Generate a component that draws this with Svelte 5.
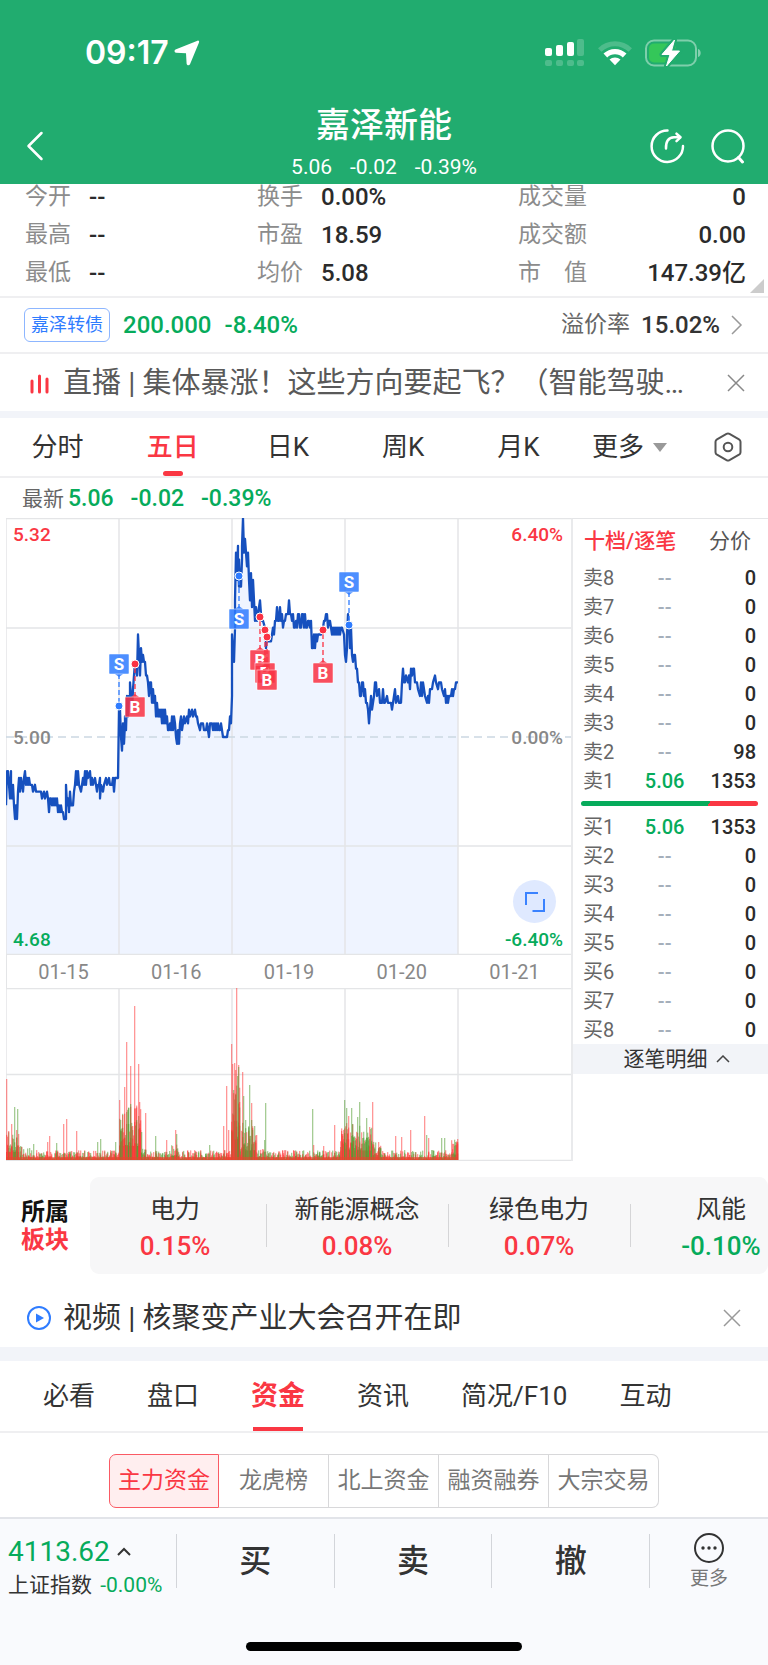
<script>
  const quotes = [
    ["今开", "--", "换手", "0.00%", "成交量", "0"],
    ["最高", "--", "市盈", "18.59", "成交额", "0.00"],
    ["最低", "--", "均价", "5.08", "市　值", "147.39亿"],
  ];

  const periods = ["分时", "五日", "日K", "周K", "月K"];
  let period = $state("五日");

  const asks = [
    ["卖8", "--", 0],
    ["卖7", "--", 0],
    ["卖6", "--", 0],
    ["卖5", "--", 0],
    ["卖4", "--", 0],
    ["卖3", "--", 0],
    ["卖2", "--", 98],
    ["卖1", "5.06", 1353],
  ];
  const bids = [
    ["买1", "5.06", 1353],
    ["买2", "--", 0],
    ["买3", "--", 0],
    ["买4", "--", 0],
    ["买5", "--", 0],
    ["买6", "--", 0],
    ["买7", "--", 0],
    ["买8", "--", 0],
  ];

  const days = ["01-15", "01-16", "01-19", "01-20", "01-21"];

  const boards = [
    ["电力", "0.15%"],
    ["新能源概念", "0.08%"],
    ["绿色电力", "0.07%"],
    ["风能", "-0.10%"],
  ];

  const sections = ["必看", "盘口", "资金", "资讯", "简况/F10", "互动"];
  let section = $state("资金");

  const funds = ["主力资金", "龙虎榜", "北上资金", "融资融券", "大宗交易"];
  let fund = $state("主力资金");

  // [x, first, last] in ticks of 0.01 away from 5.00
  const ticks = [
    [0, -10, -5], [2, -5, -7], [4, -9, -5], [5, -7, -9], [7, -7, -10], [9, -12, -10],
    [11, -12, -8], [13, -6, -8], [15, -6, -7], [17, -8, -6], [19, -5, -7], [21, -6, -7],
    [23, -6, -7], [26, -7, -8], [29, -7, -8], [33, -8, -8], [35, -8, -9], [38, -8, -9],
    [41, -8, -9], [43, -11, -9], [45, -9, -10], [47, -9, -10], [49, -9, -10], [51, -9, -11],
    [53, -10, -11], [55, -10, -11], [57, -11, -12], [59, -12, -12], [60, -7, -10], [62, -9, -11],
    [64, -8, -10], [66, -10, -10], [68, -8, -7], [70, -5, -7], [72, -5, -7], [75, -8, -7],
    [77, -6, -7], [79, -5, -7], [81, -5, -6], [84, -5, -7], [86, -6, -7], [89, -6, -7],
    [91, -8, -7], [93, -7, -6], [94, -9, -7], [97, -8, -7], [100, -6, -7], [103, -6, -7],
    [106, -7, -6], [108, -8, -6], [110, -6, -6], [112, -6, 4], [114, 4, 0], [116, -2, 2],
    [118, -1, 2], [119, 3, 1], [121, 6, 3], [123, 6, 6], [124, 8, 6], [126, 4, 7],
    [128, 9, 11], [130, 10, 9], [132, 15, 12], [133, 12, 9], [135, 13, 11], [137, 12, 11],
    [139, 11, 9], [141, 9, 8], [143, 6, 8], [145, 8, 5], [147, 7, 5], [149, 6, 3],
    [151, 5, 3], [153, 4, 3], [155, 4, 2], [157, 4, 2], [159, 4, 2], [161, 3, 1],
    [163, 1, 2], [165, 1, 3], [167, 1, 3], [169, 2, 0], [171, -1, 1], [173, -1, 2],
    [175, 3, 1], [178, 3, 2], [181, 3, 2], [183, 4, 3], [186, 4, 3], [189, 4, 3],
    [191, 3, 2], [194, 1, 2], [197, 2, 1], [200, 1, 2], [203, 0, 2], [206, 2, 1],
    [208, 2, 1], [210, 2, 1], [212, 2, 1], [214, 1, 2], [216, 1, 0], [219, 0, 0],
    [221, 0, 1], [223, 1, 3], [225, 2, 6], [226, 15, 12], [228, 11, 16], [229, 20, 27],
    [231, 23, 28], [232, 26, 22], [233, 26, 22], [235, 22, 26], [236, 28, 32], [238, 27, 29],
    [240, 27, 25], [242, 27, 23], [244, 20, 24], [246, 19, 22], [247, 23, 20], [249, 17, 19],
    [251, 17, 18], [254, 20, 18], [256, 17, 17], [259, 16, 15], [260, 13, 15], [262, 14, 14],
    [265, 14, 15], [267, 16, 15], [269, 17, 17], [271, 19, 17], [273, 17, 19], [275, 17, 18],
    [277, 16, 17], [279, 17, 18], [281, 18, 18], [283, 20, 18], [285, 18, 17], [287, 18, 16],
    [289, 16, 17], [291, 16, 18], [293, 18, 16], [295, 16, 18], [297, 18, 16], [299, 18, 16],
    [301, 16, 17], [303, 17, 16], [305, 17, 13], [307, 13, 15], [309, 13, 15], [311, 14, 15],
    [313, 15, 15], [315, 15, 16], [317, 16, 17], [319, 17, 18], [321, 18, 16], [323, 17, 17],
    [325, 16, 15], [327, 16, 15], [329, 16, 15], [331, 16, 15], [333, 16, 15], [335, 16, 16],
    [338, 15, 12], [340, 11, 13], [341, 15, 18], [343, 16, 13], [345, 16, 12], [347, 11, 12],
    [349, 12, 10], [351, 10, 8], [353, 8, 6], [355, 6, 8], [357, 8, 6], [359, 7, 5],
    [361, 5, 4], [362, 4, 2], [364, 4, 6], [366, 4, 5], [368, 6, 8], [370, 8, 6],
    [373, 7, 5], [376, 5, 7], [378, 5, 5], [381, 6, 5], [385, 5, 4], [387, 5, 6],
    [389, 7, 5], [392, 6, 5], [395, 5, 8], [397, 10, 8], [399, 8, 9], [402, 8, 9],
    [404, 7, 10], [406, 9, 10], [408, 10, 8], [411, 8, 7], [414, 6, 8], [416, 6, 8],
    [418, 7, 6], [421, 5, 6], [423, 5, 7], [426, 7, 8], [429, 9, 8], [432, 7, 8],
    [435, 8, 7], [438, 6, 7], [440, 5, 6], [442, 5, 6], [445, 6, 7], [447, 6, 7],
    [449, 7, 8], [451, 8, 8],
  ];

  const levelY = (t) => 219 - t * 6.83;
  const line = ticks
    .map(([x, a, b]) => `${x},${levelY(a).toFixed(1)} ${x + 1},${levelY(b).toFixed(1)}`)
    .join(" ");
  const area = `0,437 ${line} 452,437`;

  // dot position, badge position (top of the 20px square)
  const trades = [
    { side: "S", x: 113, dot: 188, top: 136 },
    { side: "B", x: 129, dot: 146, top: 179 },
    { side: "S", x: 233, dot: 58, top: 91 },
    { side: "B", x: 254, dot: 99, top: 132 },
    { side: "B", x: 259, dot: 112, top: 145 },
    { side: "B", x: 261, dot: 119, top: 152 },
    { side: "B", x: 317, dot: 112, top: 145 },
    { side: "S", x: 343, dot: 107, top: 54 },
  ];

  // [x, height, up]
  const spikes = [
    [0, 81, 1], [2, 29, 1], [5, 36, 1], [8, 53, 0], [11, 51, 0], [10, 30, 1], [12, 26, 1],
    [27, 16, 0], [41, 18, 1], [43, 24, 1], [50, 17, 0], [57, 36, 1], [60, 41, 1], [70, 29, 1],
    [91, 18, 0], [94, 21, 0], [109, 18, 0], [113, 60, 1], [114, 40, 0], [116, 45, 1],
    [118, 73, 1], [120, 118, 1], [122, 36, 0], [124, 94, 1], [124, 56, 0], [126, 34, 1],
    [128, 154, 1], [130, 40, 0], [132, 96, 1], [133, 58, 1], [135, 28, 0], [139, 47, 1],
    [149, 24, 0], [160, 20, 1], [169, 30, 1], [170, 26, 0], [203, 15, 0], [217, 34, 1],
    [220, 74, 1], [222, 30, 1], [225, 116, 1], [226, 96, 1], [228, 97, 1], [229, 90, 1],
    [230, 172, 1], [231, 84, 0], [232, 95, 1], [232, 93, 0], [233, 58, 1], [236, 88, 1],
    [237, 64, 0], [239, 40, 0], [243, 75, 0], [245, 57, 1], [245, 40, 0], [248, 34, 0],
    [250, 25, 1], [258, 20, 0], [259, 57, 0], [306, 51, 0], [307, 15, 1], [317, 14, 1],
    [328, 35, 1], [336, 26, 1], [338, 60, 0], [340, 52, 0], [342, 44, 1], [345, 52, 0],
    [346, 36, 0], [351, 43, 0], [353, 58, 0], [360, 42, 0], [363, 33, 1], [366, 58, 1],
    [372, 18, 1], [389, 24, 1], [395, 23, 1], [404, 30, 1], [418, 44, 1], [420, 25, 0],
    [422, 22, 1], [435, 22, 0], [438, 22, 0], [449, 18, 0], [451, 18, 1],
  ];

  // busy stretches: [from, to, ceiling]
  const busy = [
    [0, 12, 24], [113, 135, 42], [165, 172, 12], [225, 234, 60], [235, 250, 28],
    [334, 366, 28], [366, 375, 14], [445, 452, 16],
  ];

  let seed = 17;
  const rand = () => {
    seed = (seed * 16807) % 2147483647;
    return seed / 2147483647;
  };

  const volumes = [];
  for (let x = 0; x < 452; x++) {
    const zone = busy.find(([from, to]) => x >= from && x < to);
    const since = x % 113;
    const cap = zone ? zone[2] : since < 45 ? 16 - since / 5 : 9;
    const floor = zone ? zone[2] / 3 : 1;
    for (let i = 0; i < 3; i++) {
      volumes.push([x, floor + Math.pow(rand(), 2) * cap, rand() > 0.42 ? 1 : 0]);
    }
  }
  volumes.push(...spikes);
</script>

<div class="app">
  <header>
    <div class="status">
      <span class="time">09:17</span>
      <svg class="locate" width="26" height="26" viewBox="0 0 26 26">
        <path d="M23.500.7 1.500 9.500c-1.500.8-1.300 3 .5 3.200l10 .6.6 10.200c.1 2 2.600 2.400 3.400.7L25 2.500C25.500 1.200 24.600.3 23.500.7z" fill="#fff" />
      </svg>
      <svg class="signal" width="40" height="28" viewBox="0 0 40 28">
        <g fill="#fff">
          <rect x="0" y="9" width="7" height="8" rx="2" />
          <rect x="11" y="6" width="7" height="11" rx="2" />
          <rect x="22" y="3" width="7" height="14" rx="2" />
        </g>
        <g fill="#fff" opacity=".2">
          <rect x="32" y="0" width="7" height="17" rx="2" />
          <rect x="0" y="21" width="7" height="6" rx="2" />
          <rect x="11" y="21" width="7" height="6" rx="2" />
          <rect x="22" y="21" width="7" height="6" rx="2" />
          <rect x="32" y="21" width="7" height="6" rx="2" />
        </g>
      </svg>
      <svg class="wifi" width="34" height="26" viewBox="0 0 34 26">
        <path d="M0 8.200a24.500 24.500 0 0 1 34 0l-3.500 3.600a19.300 19.300 0 0 0-27 0z" fill="#fff" opacity=".2" />
        <path d="M5.500 13.600a16.500 16.500 0 0 1 23 0l-3.700 3.800a11.300 11.300 0 0 0-15.600 0z" fill="#fff" />
        <path d="M11.500 19.600a8 8 0 0 1 11 0L17 25.300z" fill="#fff" />
      </svg>
      <svg width="57" height="28" viewBox="0 0 57 28">
        <rect x="1" y="1.500" width="50" height="25" rx="8" fill="none" stroke="#fff" stroke-opacity=".42" stroke-width="2" />
        <path d="M53 10c3.600 1 3.600 7 0 8z" fill="#fff" opacity=".45" />
        <rect x="4" y="4.500" width="27" height="19" rx="5" fill="#34c759" />
        <path d="M29.500 1 17 15.500h8L21.500 27 34.500 12h-8z" fill="#fff" stroke="#21ac6f" stroke-width="5" stroke-linejoin="round" />
        <path d="M29.500 1 17 15.500h8L21.500 27 34.500 12h-8z" fill="#fff" stroke="#fff" stroke-width="1" stroke-linejoin="round" />
      </svg>
    </div>
    <div class="nav">
      <button class="back" aria-label="返回">
        <svg width="18" height="30" viewBox="0 0 18 30">
          <path d="M15.500 2 2.500 15l13 13" fill="none" stroke="#fff" stroke-width="2.500" stroke-linecap="round" stroke-linejoin="round" />
        </svg>
      </button>
      <div class="title">
        <h1>嘉泽新能</h1>
        <p><span>5.06</span><span>-0.02</span><span>-0.39%</span></p>
      </div>
      <div class="actions">
        <button aria-label="分享">
          <svg width="36" height="36" viewBox="0 0 36 36" fill="none" stroke="#fff" stroke-width="2.500" stroke-linecap="round" stroke-linejoin="round">
            <path d="M18.500 2.500A15.700 15.700 0 1 0 34 18" />
            <path d="M17 20.500c-.3-7 2-11 8-11.300h6" />
            <path d="M27.500 5.700 31.500 9.300l-4 3.800" />
          </svg>
        </button>
        <button aria-label="搜索">
          <svg width="36" height="36" viewBox="0 0 36 36" fill="none" stroke="#fff" stroke-width="2.500" stroke-linecap="round">
            <circle cx="18" cy="18" r="15.500" />
            <path d="m28.500 29.500 4 4.500" stroke-width="3" />
          </svg>
        </button>
      </div>
    </div>
  </header>

  <section class="quotes">
    {#each quotes as [a, av, b, bv, c, cv]}
      <div class="quote">
        <span class="k">{a}</span><b class="v">{av}</b>
        <span class="k">{b}</span><b class="v">{bv}</b>
        <span class="k">{c}</span><b class="v end">{cv}</b>
      </div>
    {/each}
    <i class="corner"></i>
  </section>

  <section class="bond">
    <span class="tag">嘉泽转债</span>
    <b class="down">200.000</b>
    <b class="down">-8.40%</b>
    <span class="premium">溢价率</span>
    <b>15.02%</b>
    <svg width="12" height="20" viewBox="0 0 12 20">
      <path d="m1 1 9 9-9 9" fill="none" stroke="#999" stroke-width="1.500" />
    </svg>
  </section>

  <section class="news">
    <svg width="26" height="26" viewBox="0 0 26 26" stroke="#fa3743" stroke-width="3" stroke-linecap="round">
      <path d="M6 11v11M13.500 6v16M21 9v13" />
    </svg>
    <a href="#live">直播 | 集体暴涨！这些方向要起飞？（智能驾驶…</a>
    <button aria-label="关闭直播">
      <svg width="18" height="18" viewBox="0 0 18 18"><path d="m1 1 16 16M17 1 1 17" stroke="#888" stroke-width="1.500" /></svg>
    </button>
  </section>

  <nav class="periods">
    {#each periods as name}
      <button class:active={period === name} onclick={() => (period = name)}>{name}</button>
    {/each}
    <button class="more">更多<i></i></button>
    <button class="settings" aria-label="设置">
      <svg width="28" height="30" viewBox="0 0 28 30" fill="none" stroke="#555" stroke-width="2">
        <path d="M12.500 1.900q1.500-.8 3 0l9.500 5.400q1.500.9 1.500 2.500v10.400q0 1.600-1.500 2.500l-9.500 5.400q-1.500.8-3 0L3 22.700q-1.500-.9-1.500-2.500V9.800q0-1.600 1.500-2.500z" />
        <circle cx="14" cy="15" r="4.300" />
      </svg>
    </button>
  </nav>

  <p class="latest"><span>最新</span><b>5.06</b><b>-0.02</b><b>-0.39%</b></p>

  <section class="market">
    <div class="charts">
      <div class="price">
        <svg viewBox="0 0 565 437">
          <polygon points={area} fill="#eff4ff" />
          <g stroke="#e4e5e7" stroke-width="1.500">
            {#each [0, 113, 226, 339, 452] as x}
              <path d="M{x} 0V437" />
            {/each}
            <path d="M0 .5H565M0 110H565M0 328H565M0 436.500H565" />
          </g>
          <path d="M0 219H565" stroke="#cbd7e2" stroke-width="1.500" stroke-dasharray="8 5" />
          <polyline points={line} fill="none" stroke="#1650be" stroke-width="2.300" stroke-linejoin="round" />
          {#each trades as { side, x, dot, top }}
            {@const color = side === "S" ? "#2f7cff" : "#fa3243"}
            {@const above = top < dot}
            <path d="M{x} {above ? top + 20 : top} V{dot}" stroke={color} stroke-width="1.300" stroke-dasharray="5 3" />
            <g fill={color} opacity=".85">
              <rect x={x - 10} y={top} width="20" height="20" rx="1" />
              <path d={above ? `M${x - 4} ${top + 20}h8l-4 3z` : `M${x - 4} ${top}h8l-4-3z`} />
            </g>
            <rect x={x - 10} y={top} width="20" height="20" fill="none" stroke="#fff" stroke-opacity=".5" />
            <text {x} y={top + 16} text-anchor="middle">{side}</text>
            <circle cx={x} cy={dot} r="4" fill={color} stroke="#fff" stroke-width="1" />
          {/each}
        </svg>
        <span class="axis top-left up">5.32</span>
        <span class="axis top-right up">6.40%</span>
        <span class="axis mid-left">5.00</span>
        <span class="axis mid-right">0.00%</span>
        <span class="axis bottom-left down">4.68</span>
        <span class="axis bottom-right down">-6.40%</span>
        <button class="expand" aria-label="全屏">
          <svg width="22" height="22" viewBox="0 0 22 22">
            <path d="M2 14V2h12M8.500 20H20V8" fill="none" stroke="#3a82ff" stroke-width="2" />
          </svg>
        </button>
      </div>
      <div class="days">
        {#each days as day}
          <span>{day}</span>
        {/each}
      </div>
      <svg class="volume" viewBox="0 0 565 173">
        <g stroke="#e4e5e7" stroke-width="1.500">
          {#each [0, 113, 226, 339, 452] as x}
            <path d="M{x} 0V172" />
          {/each}
          <path d="M0 .5H565M0 86.500H565M0 172.500H565" />
        </g>
        {#each volumes as [x, h, up]}
          <rect {x} y={172 - h} width="1.300" height={h} fill={up ? "#ff3030" : "#4c9a2a"} opacity=".5" />
        {/each}
        <rect y="169" width="452" height="3" fill="#e8452e" opacity=".6" />
      </svg>
    </div>

    <div class="book">
      <div class="book-tabs">
        <button class="active">十档/逐笔</button>
        <button>分价</button>
      </div>
      <table>
        <tbody>
          {#each asks as [label, price, amount]}
            <tr><th>{label}</th><td class:down={price !== "--"}>{price}</td><td>{amount}</td></tr>
          {/each}
        </tbody>
      </table>
      <div class="ratio"></div>
      <table>
        <tbody>
          {#each bids as [label, price, amount]}
            <tr><th>{label}</th><td class:down={price !== "--"}>{price}</td><td>{amount}</td></tr>
          {/each}
        </tbody>
      </table>
      <button class="detail">
        逐笔明细
        <svg width="14" height="8" viewBox="0 0 14 8"><path d="m1 7 6-6 6 6" fill="none" stroke="#444" stroke-width="1.500" /></svg>
      </button>
    </div>
  </section>

  <section class="boards">
    <h2>所属<em>板块</em></h2>
    <ul>
      {#each boards as [name, change]}
        <li>
          <span>{name}</span>
          <b class={change.startsWith("-") ? "down" : "up"}>{change}</b>
        </li>
      {/each}
    </ul>
  </section>

  <section class="news video">
    <svg width="26" height="26" viewBox="0 0 26 26">
      <circle cx="13" cy="13" r="11" fill="none" stroke="#2f7cff" stroke-width="2" />
      <path d="M10 8.500v9l8-4.500z" fill="#2f7cff" />
    </svg>
    <a href="#video">视频 | 核聚变产业大会召开在即</a>
    <button aria-label="关闭视频">
      <svg width="18" height="18" viewBox="0 0 18 18"><path d="m1 1 16 16M17 1 1 17" stroke="#999" stroke-width="1.500" /></svg>
    </button>
  </section>

  <nav class="sections">
    {#each sections as name}
      <button class:active={section === name} onclick={() => (section = name)}>{name}</button>
    {/each}
  </nav>

  <div class="funds">
    {#each funds as name}
      <button class:active={fund === name} onclick={() => (fund = name)}>{name}</button>
    {/each}
  </div>

  <footer>
    <div class="toolbar">
      <button class="index">
        <span class="point">
          4113.62
          <svg width="14" height="9" viewBox="0 0 14 9"><path d="m1 8 6-6 6 6" fill="none" stroke="#333" stroke-width="2" /></svg>
        </span>
        <span class="name">上证指数 <em>-0.00%</em></span>
      </button>
      <button class="trade">买</button>
      <button class="trade">卖</button>
      <button class="trade">撤</button>
      <button class="other">
        <svg width="32" height="32" viewBox="0 0 32 32">
          <circle cx="16" cy="16" r="14" fill="none" stroke="#333" stroke-width="2" />
          <g fill="#333"><circle cx="10" cy="16" r="1.700" /><circle cx="16" cy="16" r="1.700" /><circle cx="22" cy="16" r="1.700" /></g>
        </svg>
        更多
      </button>
    </div>
    <div class="home"></div>
  </footer>
</div>

<style>
  :global(body) {
    background: #fff;
  }

  .app {
    font-family: Roboto, "Noto Sans CJK SC", sans-serif;
    font-size: 24px;
    line-height: 24px;
    color: #333;
    overflow: hidden;
  }

  .app * {
    box-sizing: border-box;
  }

  button {
    font: inherit;
    color: inherit;
    background: none;
    border: 0;
    padding: 0;
  }

  svg {
    display: block;
    flex: none;
  }

  b {
    font-weight: 500;
  }

  p, h1, h2, ul {
    margin: 0;
    padding: 0;
  }

  em {
    font-style: normal;
  }

  .up {
    color: #fa3743;
  }

  .down {
    color: #06ab5b;
  }

  header {
    position: relative;
    background: #21ac6f;
    color: #fff;
  }

  .status {
    display: flex;
    align-items: center;
    height: 106px;
    padding: 0 66px 0 85px;
  }

  .time {
    font-family: Inter, sans-serif;
    font-size: 32px;
    font-weight: 600;
  }

  .locate {
    margin-left: 5px;
  }

  .signal {
    margin-left: auto;
  }

  .wifi {
    margin: 0 13px;
  }

  .nav {
    display: grid;
    grid-template-columns: 1fr auto 1fr;
    align-items: center;
    height: 78px;
    padding: 0 22px;
  }

  .back {
    justify-self: start;
    padding-left: 4px;
  }

  .title {
    padding-bottom: 7px;
    text-align: center;
  }

  .title h1 {
    font-size: 34px;
    line-height: 38px;
    font-weight: 500;
  }

  .title p {
    display: flex;
    justify-content: center;
    gap: 18px;
    margin-top: 11px;
    font-size: 21px;
  }

  .actions {
    display: flex;
    justify-content: flex-end;
    gap: 25px;
  }

  .quotes {
    position: relative;
    display: grid;
    gap: 14px;
    padding: 1px 22px 11px 25px;
    border-bottom: 2px solid #efeff1;
  }

  .quote {
    display: grid;
    grid-template-columns: 64px 168px 64px 197px 1fr auto;
  }

  .k {
    font-size: 23px;
    color: #8c8c8c;
    white-space: nowrap;
  }

  .v {
    color: #2b2b2b;
  }

  .corner {
    position: absolute;
    right: 4px;
    bottom: 3px;
    border: 7px solid transparent;
    border-right-color: #ccc;
    border-bottom-color: #ccc;
  }

  .bond {
    display: flex;
    align-items: center;
    height: 56px;
    padding: 0 25px 0 24px;
    border-bottom: 2px solid #efeff1;
  }

  .tag {
    margin-right: 13px;
    padding: 4px 6px;
    border: 1px solid #8db6ff;
    border-radius: 6px;
    font-size: 18px;
    color: #2f7cff;
  }

  .bond .down {
    margin-right: 13px;
  }

  .premium {
    margin-left: auto;
    margin-right: 11px;
    font-size: 23px;
    color: #666;
  }

  .bond svg {
    margin-left: 11px;
  }

  .news {
    display: flex;
    align-items: center;
    height: 64px;
    padding: 0 23px 0 26px;
    border-bottom: 7px solid #f2f4f9;
  }

  .news a {
    flex: 1;
    margin-left: 11px;
    font-size: 29px;
    line-height: 40px;
    color: #595959;
    text-decoration: none;
    white-space: nowrap;
  }

  .periods {
    display: flex;
    height: 60px;
    padding-right: 26px;
    border-bottom: 2px solid #efeff1;
    font-size: 26px;
  }

  .periods button {
    position: relative;
    flex: 1;
  }

  .periods .active {
    color: #fa3743;
    font-weight: 500;
  }

  .periods .active::after {
    content: "";
    position: absolute;
    left: calc(50% - 10px);
    bottom: 0;
    width: 20px;
    height: 5px;
    border-radius: 3px;
    background: #fa3743;
  }

  .periods .more {
    display: flex;
    flex: none;
    align-items: center;
    gap: 9px;
    margin-left: 16px;
  }

  .more i {
    border: 7px solid transparent;
    border-top: 9px solid #999;
    border-bottom: 0;
  }

  .periods .settings {
    flex: none;
    margin-left: 47px;
  }

  .latest {
    display: flex;
    gap: 17px;
    padding: 9px 22px 7px;
    font-size: 23px;
    color: #06ab5b;
  }

  .latest span {
    margin-right: -13px;
    font-size: 21px;
    color: #666;
  }

  .market {
    display: grid;
    grid-template-columns: 565fr 197fr;
    padding-left: 6px;
  }

  .price {
    position: relative;
  }

  .charts svg {
    width: 100%;
  }

  .price text {
    font-size: 17px;
    font-weight: 700;
    fill: #fff;
  }

  .axis {
    position: absolute;
    font-size: 19px;
    font-weight: 500;
    color: #888;
  }

  .axis.up {
    color: #fa3743;
  }

  .axis.down {
    color: #06ab5b;
  }

  .top-left, .mid-left, .bottom-left {
    left: 7px;
  }

  .top-right, .mid-right, .bottom-right {
    right: 8px;
  }

  .top-left, .top-right {
    top: 5px;
  }

  .mid-left, .mid-right {
    top: calc(50% - 11px);
  }

  .bottom-left, .bottom-right {
    bottom: 3px;
  }

  .expand {
    position: absolute;
    right: 15px;
    bottom: 32px;
    display: grid;
    place-items: center;
    width: 43px;
    height: 43px;
    border-radius: 50%;
    background: #dfe9ff;
  }

  .expand svg {
    width: 22px;
  }

  .days {
    display: grid;
    grid-template-columns: repeat(5, 1fr);
    padding: 5px 0 4px;
    border-left: 1px solid #e4e5e7;
    font-size: 20px;
    color: #888;
    text-align: center;
  }

  .book {
    border-left: 2px solid #e9eaec;
    border-top: 1px solid #e4e5e7;
    font-size: 20px;
  }

  .book-tabs {
    display: flex;
    justify-content: space-between;
    padding: 10px 17px 10px 11px;
    font-size: 21px;
    color: #555;
  }

  .book-tabs .active {
    color: #fa3743;
    font-weight: 500;
  }

  table {
    width: 100%;
    border-collapse: collapse;
    table-layout: fixed;
  }

  tr {
    height: 29px;
  }

  th, td {
    padding: 0;
    text-align: center;
    font-weight: 500;
    color: #2b2b2b;
  }

  th {
    width: 30%;
    padding-left: 10px;
    text-align: left;
    font-weight: 400;
    color: #666;
  }

  td:nth-child(2) {
    width: 34%;
    color: #a5afbb;
  }

  td.down:nth-child(2) {
    color: #06ab5b;
  }

  td:last-child {
    padding-right: 12px;
    text-align: right;
  }

  .ratio {
    height: 5px;
    margin: 6px 10px 6px 8px;
    border-radius: 3px;
    background: linear-gradient(120deg, #06ab5b 72%, #fa3743 72%);
  }

  .detail {
    display: flex;
    align-items: center;
    justify-content: center;
    gap: 8px;
    width: 100%;
    height: 30px;
    padding-left: 12px;
    background: #f2f4f8;
    font-size: 21px;
  }

  .boards {
    display: flex;
    align-items: center;
    margin-top: 16px;
  }

  h2 {
    width: 90px;
    flex: none;
    padding-left: 21px;
    font-size: 24px;
    line-height: 28px;
    font-weight: 700;
    color: #111;
  }

  h2 em {
    display: block;
    color: #fa3743;
  }

  .boards ul {
    display: flex;
    flex: 1;
    overflow: hidden;
    list-style: none;
    border-radius: 9px;
    background: #f7f7f8;
  }

  li {
    position: relative;
    flex: none;
    width: 182px;
    padding: 20px 0 15px;
    text-align: center;
  }

  li:first-child {
    width: 176px;
    padding-right: 6px;
  }

  li span, li b {
    display: block;
    font-size: 25px;
    line-height: 26px;
  }

  li b {
    margin-top: 10px;
    font-size: 26px;
  }

  li + li::before {
    content: "";
    position: absolute;
    left: 0;
    top: 27px;
    height: 43px;
    border-left: 1px solid #d5d5d7;
  }

  .video {
    height: 72px;
    margin-top: 15px;
    padding-right: 27px;
    border-bottom-width: 14px;
  }

  .video a {
    color: #333;
  }

  .sections {
    display: flex;
    gap: 52px;
    height: 72px;
    padding: 0 43px;
    border-bottom: 2px solid #efeff1;
    font-size: 26px;
  }

  .sections button {
    position: relative;
    white-space: nowrap;
  }

  .sections .active {
    color: #fa3743;
    font-size: 27px;
    font-weight: 700;
  }

  .sections .active::after {
    content: "";
    position: absolute;
    left: 2px;
    right: 2px;
    bottom: 0;
    height: 4px;
    background: #fa3743;
  }

  .funds {
    display: flex;
    width: max-content;
    margin: 21px auto 9px;
  }

  .funds button {
    width: 110px;
    height: 54px;
    border: 1px solid #d8d8da;
    border-left-width: 0;
    font-size: 23px;
    color: #777;
    white-space: nowrap;
  }

  .funds button:first-child {
    border-left-width: 1px;
    border-radius: 7px 0 0 7px;
  }

  .funds button:last-child {
    border-radius: 0 7px 7px 0;
  }

  .funds .active {
    border-color: #fa5a64;
    background: #ffeeef;
    color: #fa3743;
  }

  footer {
    border-top: 2px solid #e2e4e9;
    background: #f9fafd;
    padding-bottom: 15px;
  }

  .toolbar {
    display: flex;
    align-items: flex-start;
    padding-top: 15px;
  }

  .index {
    width: 176px;
    height: 68px;
    padding-left: 8px;
    text-align: left;
    white-space: nowrap;
  }

  .point {
    display: flex;
    align-items: center;
    gap: 7px;
    margin-bottom: 8px;
    font-size: 28px;
    color: #06ab5b;
  }

  .name {
    font-size: 21px;
  }

  .name em {
    margin-left: 3px;
    color: #06ab5b;
  }

  .trade {
    flex: 1;
    height: 54px;
    border-left: 1px solid #d3d5da;
    font-size: 32px;
    font-weight: 500;
  }

  .other {
    display: flex;
    flex-direction: column;
    align-items: center;
    justify-content: center;
    gap: 3px;
    width: 119px;
    height: 54px;
    border-left: 1px solid #d3d5da;
    font-size: 19px;
    color: #777;
  }

  .home {
    width: 276px;
    height: 9px;
    margin: 40px auto 0;
    border-radius: 5px;
    background: #000;
  }
</style>
